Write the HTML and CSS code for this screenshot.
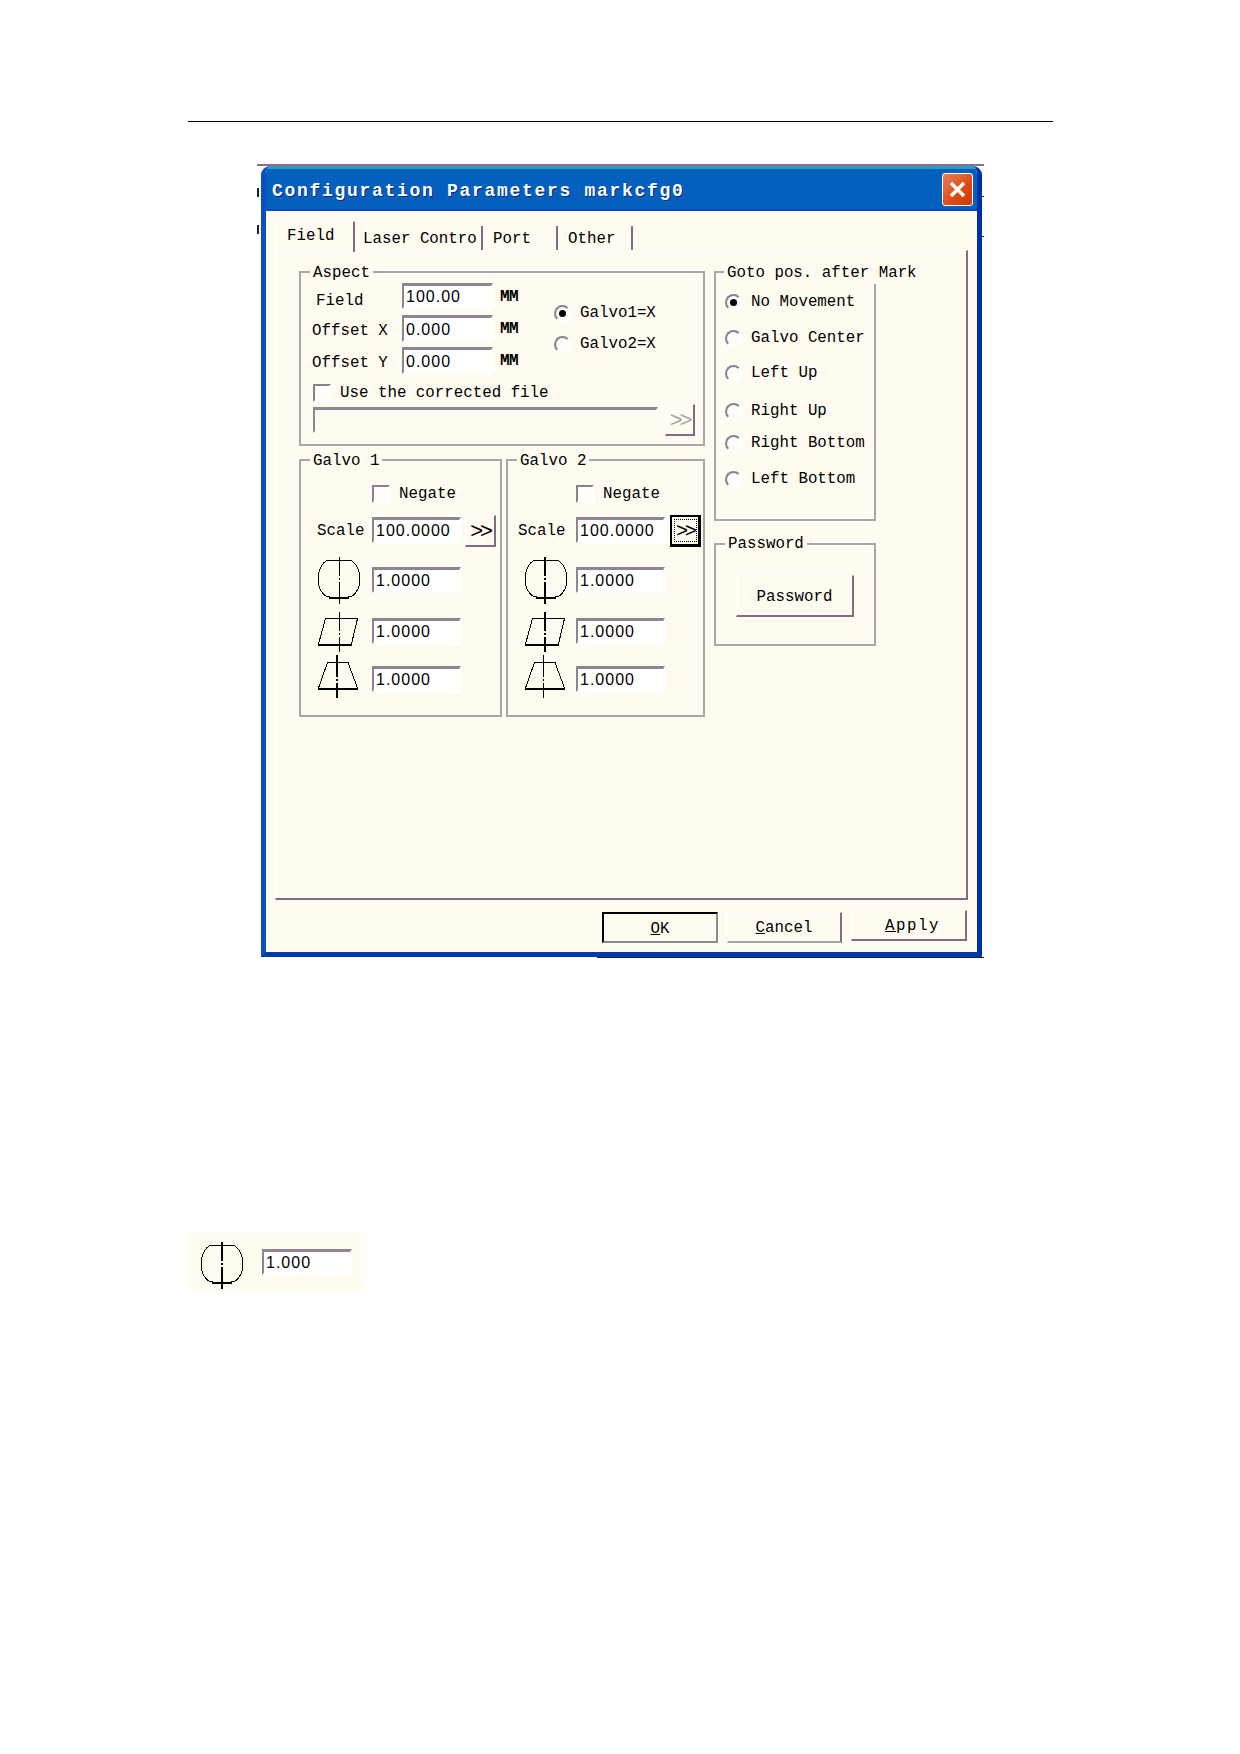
FILE: index.html
```html
<!DOCTYPE html>
<html lang="en">
<head>
<meta charset="utf-8">
<title>Configuration Parameters</title>
<link rel="stylesheet" href="styles.css">
</head>
<body>
<svg class="defs" width="0" height="0" aria-hidden="true">
  <symbol id="barrel" viewBox="0 0 44 48"><path class="ol" d="M13 4H31C38 4 43 14 43 23C43 32 38 41 31 41H13C6 41 1 32 1 23C1 14 6 4 13 4Z"/><path class="thick" d="M12 41.5H32"/></symbol>
  <symbol id="para" viewBox="0 0 44 44"><path class="ol" d="M8.5 9.5H40.5L34.5 35H1.5Z"/><path class="thick" d="M1 35.5H35"/></symbol>
  <symbol id="trap" viewBox="0 0 44 52"><path class="ol" d="M10.500 9.500H31L40.500 35H1.500Z"/><path class="thick" d="M1 35.500H41"/></symbol>
</svg>
<main class="page">
  <hr class="rule">
  <div class="shot">
    <i class="mark mark-l1"></i><i class="mark mark-l2"></i><i class="mark mark-r1"></i><i class="mark mark-r2"></i>
    <section class="dialog">
      <header class="titlebar">
        <h1 class="title">Configuration Parameters markcfg0</h1>
        <button class="close" aria-label="Close"><svg width="19" height="19" viewBox="0 0 19 19"><path d="M3 3L16 16M16 3L3 16" stroke="#fff" stroke-width="3.500" fill="none"/></svg></button>
      </header>
      <nav class="tabs">
        <span class="tab tab-active">Field</span>
        <span class="tab tab-laser">Laser Contro</span>
        <span class="tab tab-port">Port</span>
        <span class="tab tab-port">Other</span>
      </nav>
      <div class="panel">
        <div class="col-left">
          <section class="group aspect">
            <span class="legend">Aspect</span>
            <div class="aspect-top">
              <div class="aspect-form">
                <span class="lbl lbl-field">Field</span><span class="input">100.00</span><span class="unit">MM</span>
                <span class="lbl">Offset X</span><span class="input input-tall">0.000</span><span class="unit">MM</span>
                <span class="lbl">Offset Y</span><span class="input input-tall">0.000</span><span class="unit">MM</span>
              </div>
              <div class="axis-radios">
                <label class="opt"><i class="radio on"></i>Galvo1=X</label>
                <label class="opt"><i class="radio"></i>Galvo2=X</label>
              </div>
            </div>
            <label class="check-row"><i class="check"></i>Use the corrected file</label>
            <div class="file-row"><span class="input input-file"></span><span class="btn-more off">&gt;&gt;</span></div>
          </section>
          <div class="galvos">
            <section class="group galvo galvo-a">
              <span class="legend">Galvo 1</span>
              <label class="negate"><i class="check"></i>Negate</label>
              <div class="scale-row"><span class="scale-lbl">Scale</span><span class="input">100.0000</span><span class="btn-more">&gt;&gt;</span></div>
              <div class="irow irow-1"><svg class="ic" width="44" height="48"><use href="#barrel"/><path class="axis" d="M22.500 1V20M22.500 22V24M22.500 26V48"/></svg><span class="input">1.0000</span></div>
              <div class="irow irow-2"><svg class="ic" width="44" height="44"><use href="#para"/><path class="axis" d="M22.500 3V22M22.500 24V26M22.500 28V43"/></svg><span class="input">1.0000</span></div>
              <div class="irow irow-3"><svg class="ic" width="44" height="52"><use href="#trap"/><path class="axis axis-b" d="M20 2V24M20 26V28M20 30V45"/></svg><span class="input">1.0000</span></div>
            </section>
            <section class="group galvo galvo-b">
              <span class="legend">Galvo 2</span>
              <label class="negate"><i class="check"></i>Negate</label>
              <div class="scale-row"><span class="scale-lbl">Scale</span><span class="input">100.0000</span><span class="btn-more focus"><span class="dots">&gt;&gt;</span></span></div>
              <div class="irow irow-1"><svg class="ic" width="44" height="48"><use href="#barrel"/><path class="axis axis-b" d="M21 1V20M21 22V24M21 26V48"/></svg><span class="input">1.0000</span></div>
              <div class="irow irow-2"><svg class="ic" width="44" height="44"><use href="#para"/><path class="axis axis-b" d="M21 3V22M21 24V26M21 28V43"/></svg><span class="input">1.0000</span></div>
              <div class="irow irow-3"><svg class="ic" width="44" height="52"><use href="#trap"/><path class="axis" d="M19.500 2V24M19.500 26V28M19.500 30V45"/></svg><span class="input">1.0000</span></div>
            </section>
          </div>
        </div>
        <div class="col-right">
          <section class="group goto">
            <span class="legend">Goto pos. after Mark</span>
            <label class="opt"><i class="radio on"></i>No Movement</label>
            <label class="opt"><i class="radio"></i>Galvo Center</label>
            <label class="opt"><i class="radio"></i>Left Up</label>
            <label class="opt"><i class="radio"></i>Right Up</label>
            <label class="opt"><i class="radio"></i>Right Bottom</label>
            <label class="opt"><i class="radio"></i>Left Bottom</label>
          </section>
          <section class="group password">
            <span class="legend legend-pass">Password</span>
            <span class="btn-pass">Password</span>
          </section>
        </div>
      </div>
      <footer class="actions">
        <span class="act act-ok"><u>O</u>K</span>
        <span class="act act-cancel"><u>C</u>ancel</span>
        <span class="act act-apply"><u>A</u>pply</span>
      </footer>
    </section>
    <div class="baseline"></div>
  </div>
  <div class="snippet">
    <svg class="ic" width="44" height="48"><use href="#barrel"/><path class="axis axis-b" d="M22 1V20M22 22V24M22 26V48"/></svg>
    <span class="input">1.000</span>
  </div>
</main>
</body>
</html>
```
FILE: styles.css
```css
* { box-sizing: border-box; }
html, body { margin: 0; padding: 0; background: #fff; }
body { font: 15.800px/20px "Liberation Mono", monospace; color: #000; }
.defs { position: absolute; }
.page { width: 1240px; height: 1754px; padding: 121px 187px 0 188px; }
.rule { margin: 0; height: 1px; border: 0; background: #000; }

.shot { position: relative; margin: 42px 0 0 69px; width: 727px; border-top: 2px solid #8a6f8c; }
.mark { position: absolute; background: #222; }
.mark-l1 { left: 0; top: 22px; width: 2px; height: 9px; }
.mark-l2 { left: 0; top: 59px; width: 2px; height: 9px; }
.mark-r1 { right: 0; top: 30px; width: 3px; height: 1px; }
.mark-r2 { right: 0; top: 70px; width: 3px; height: 1px; }
.baseline { height: 1px; margin-left: 340px; background: #222; }

.dialog { margin-left: 4px; width: 721px; height: 791px; background: #fffbf0; border: 5px solid #0438b0; border-top: 0; border-left-color: #0a50c4; border-right-color: #0030a8; border-radius: 9px 9px 0 0; overflow: hidden; }
.titlebar { height: 45px; padding: 0 4px 0 5px; display: flex; align-items: center; justify-content: space-between; background: #0560bd; border-top: 3px solid #2a9cc4; border-bottom: 2px solid #0a48c0; }
.title { margin: 4px 0 0 1px; font: bold 18px/22px "Liberation Mono", monospace; letter-spacing: 1.700px; color: #fff; text-shadow: 1px 1px 0 #002a80; }
.close { width: 31px; height: 33px; padding: 0; display: flex; align-items: center; justify-content: center; background: linear-gradient(135deg, #e8805a, #dc4a14 60%, #d03a08); border: 1px solid #fff; border-radius: 3px; }

.tabs { height: 39px; padding-left: 9px; display: flex; align-items: flex-end; }
.tab { height: 24px; padding-left: 10px; border-right: 2px solid #846a86; line-height: 26px; white-space: pre; }
.tab-active { width: 80px; height: 31px; margin-bottom: -2px; padding-left: 11px; line-height: 28px; border-top: 1px solid #fff; border-left: 1px solid #fff; position: relative; }
.tab-laser { width: 128px; padding-left: 8px; }
.tab-port { width: 75px; }

.panel { margin-left: 9px; width: 693px; height: 650px; padding: 20px 0 0 23px; display: flex; gap: 9px; border-top: 1px solid #fff; border-left: 1px solid #fff; border-right: 2px solid #846a86; border-bottom: 2px solid #846a86; }
.col-left { width: 406px; display: flex; flex-direction: column; gap: 13px; }
.col-right { width: 162px; display: flex; flex-direction: column; gap: 22px; }

.group { position: relative; border: 2px solid #a8a6a8; }
.legend { position: absolute; top: -11px; left: 9px; padding: 0 3px; line-height: 22px; background: #fffbf0; white-space: pre; }
.legend-pass { top: -12px; }

.input { display: block; width: 91px; height: 26px; padding-left: 2px; font: 16px/22px "Liberation Sans", sans-serif; letter-spacing: 1px; background: #fff; border-top: 3px solid #8f8592; border-left: 2px solid #8f8592; border-right: 2px solid #fff; border-bottom: 2px solid #fff; }
.input-tall { height: 27px; line-height: 23px; }

.aspect { height: 175px; padding: 10px 0 0 11px; }
.aspect-top { display: flex; }
.aspect-form { display: grid; grid-template-columns: 90px 91px auto; grid-auto-rows: 32px; width: 242px; }
.lbl { line-height: 33px; }
.lbl-field { padding-left: 4px; line-height: 36px; }
.unit { padding-left: 7px; line-height: 28px; font-weight: bold; font-size: 16px; letter-spacing: -0.500px; }
.axis-radios { margin-top: 20px; display: flex; flex-direction: column; gap: 11px; }
.opt { display: flex; align-items: center; gap: 9px; height: 20px; white-space: pre; }
.radio { flex: none; position: relative; width: 17px; height: 17px; border-radius: 50%; background: #fffdf8; border: 2px solid; border-color: #8d7f90 #fff #fff #8d7f90; }
.radio.on::after { content: ""; position: absolute; left: 3px; top: 3px; width: 7px; height: 7px; border-radius: 50%; background: #000; }
.check { flex: none; display: block; width: 18px; height: 18px; background: #fffdf8; border: 2px solid; border-color: #8d7f90 #fff #fff #8d7f90; }
.check-row { margin: 4px 0 0 1px; display: flex; align-items: center; gap: 9px; height: 19px; }
.file-row { margin: 2px 0 0 1px; display: flex; align-items: flex-start; gap: 7px; }
.input-file { margin-top: 3px; width: 345px; background: #fffbf0; border-right-color: #fffdf8; border-bottom-color: #fffdf8; }
.btn-more { flex: none; width: 31px; height: 32px; display: flex; align-items: center; justify-content: center; font: 22px/1 "Liberation Sans", sans-serif; letter-spacing: -3px; border-top: 1px solid #fff; border-left: 1px solid #fff; border-right: 2px solid #846a86; border-bottom: 2px solid #846a86; }
.btn-more.off { color: #a8a6a8; width: 30px; }
.btn-more.focus { border: 2px solid #000; border-bottom-width: 3px; border-right-width: 3px; }
.dots { display: block; width: 23px; height: 23px; font-size: 20px; line-height: 20px; text-align: center; letter-spacing: -3px; border: 1px dotted #000; }

.galvos { display: flex; gap: 4px; }
.galvo { height: 258px; padding: 23px 0 0 16px; --c: 55px; }
.galvo-a { width: 203px; }
.galvo-b { width: 199px; --c: 52px; }
.negate { display: flex; align-items: center; gap: 9px; height: 19px; margin-left: var(--c); }
.scale-row { margin-top: 12px; height: 32px; display: flex; }
.scale-lbl { width: var(--c); line-height: 32px; }
.galvo-b .scale-lbl { margin-left: -6px; width: 58px; }
.scale-row .input { margin: 2px 4px 0 0; height: 26px; width: 89px; }
.galvo-b .scale-row .input { margin-right: 5px; }
.irow { display: flex; align-items: center; }
.irow .ic { flex: none; margin-right: calc(var(--c) - 44px); }
.irow .input { width: 89px; }
.irow-1 { margin-top: 10px; height: 46px; }
.irow-2 { margin-top: 6px; height: 44px; }
.irow-3 { height: 52px; }
.ic { display: block; overflow: visible; shape-rendering: crispEdges; }
.ol { fill: none; stroke: #000; stroke-width: 1; }
.thick { fill: none; stroke: #000; stroke-width: 2; }
.axis { fill: none; stroke: #000; stroke-width: 1; }
.axis-b { stroke-width: 2; }

.goto { height: 250px; padding: 19px 0 0 9px; }
.goto .legend { left: 8px; }
.goto .opt + .opt { margin-top: 16px; }
.goto .opt:nth-of-type(3) { margin-top: 15px; }
.goto .opt:nth-of-type(4) { margin-top: 18px; }
.goto .opt:nth-of-type(5) { margin-top: 12px; }
.goto .opt:nth-of-type(6) { margin-top: 16px; }
.password { height: 103px; padding: 30px 0 0 20px; }
.btn-pass { display: block; width: 118px; height: 42px; line-height: 42px; text-align: center; border-top: 1px solid #fff; border-left: 1px solid #fff; border-right: 2px solid #846a86; border-bottom: 2px solid #846a86; }

.actions { height: 52px; padding: 12px 10px 0 0; display: flex; justify-content: flex-end; gap: 9px; }
.act { width: 116px; height: 31px; line-height: 30px; text-align: center; border-top: 1px solid #fff; border-left: 1px solid #fff; border-right: 2px solid #846a86; border-bottom: 2px solid #846a86; }
.act-ok { border-top: 2px solid #000; border-left: 2px solid #000; border-right-color: #8a8a8a; border-bottom-color: #8a8a8a; }
.act-cancel { width: 115px; border-bottom-color: #a5a5a5; }
.act-apply { margin-top: -2px; padding-left: 8px; letter-spacing: 1.500px; }

.snippet { margin-top: 275px; width: 176px; height: 57px; padding: 8px 0 0 12px; display: flex; gap: 18px; background: #fffbf0; }
.snippet .input { margin-top: 8px; width: 90px; }
```
